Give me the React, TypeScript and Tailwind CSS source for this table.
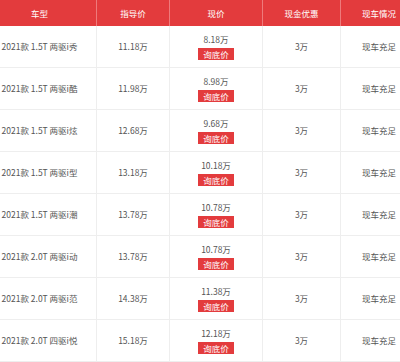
import React from "react";

const rows = [
  { name: "2021款 1.5T 两驱i秀", guide: "11.18万", now: "8.18万" },
  { name: "2021款 1.5T 两驱i酷", guide: "11.98万", now: "8.98万" },
  { name: "2021款 1.5T 两驱i炫", guide: "12.68万", now: "9.68万" },
  { name: "2021款 1.5T 两驱i型", guide: "13.18万", now: "10.18万" },
  { name: "2021款 1.5T 两驱i潮", guide: "13.78万", now: "10.78万" },
  { name: "2021款 2.0T 两驱i动", guide: "13.78万", now: "10.78万" },
  { name: "2021款 2.0T 两驱i范", guide: "14.38万", now: "11.38万" },
  { name: "2021款 2.0T 四驱i悦", guide: "15.18万", now: "12.18万" },
];

const cols = "grid grid-cols-[114px_73px_93px_78px_76px]";

export default function App() {
  return (
    <div
      className="h-[362px] w-[400px] overflow-hidden bg-white text-[8.5px] text-[#555]"
      style={{ fontFamily: '"Noto Sans CJK SC", "Noto Sans", sans-serif' }}
    >
      <div className="-ml-[17px] w-[434px]">
        {/* Header */}
        <div className={cols + " h-[26px] bg-[#e33b3d] text-white"}>
          {["车型", "指导价", "现价", "现金优惠", "现车情况"].map((h, i) => (
            <div
              key={i}
              className={
                "flex items-center justify-center" +
                (i < 4 ? " border-r border-[#ee7a7b]" : "")
              }
            >
              {h}
            </div>
          ))}
        </div>
        {/* Rows */}
        {rows.map((r, i) => (
          <div key={i} className={cols + " h-[42px] border-b border-[#eee]"}>
            <div className="flex items-center justify-center border-r border-[#eee] whitespace-nowrap">
              {r.name}
            </div>
            <div className="flex items-center justify-center border-r border-[#eee]">
              {r.guide}
            </div>
            <div className="flex flex-col items-center justify-center gap-[3px] border-r border-[#eee]">
              <span className="leading-[11px]">{r.now}</span>
              <span className="bg-[#e33b3d] px-[5px] leading-[12px] text-white">
                询底价
              </span>
            </div>
            <div className="flex items-center justify-center border-r border-[#eee]">
              3万
            </div>
            <div className="flex items-center justify-center">现车充足</div>
          </div>
        ))}
      </div>
    </div>
  );
}
